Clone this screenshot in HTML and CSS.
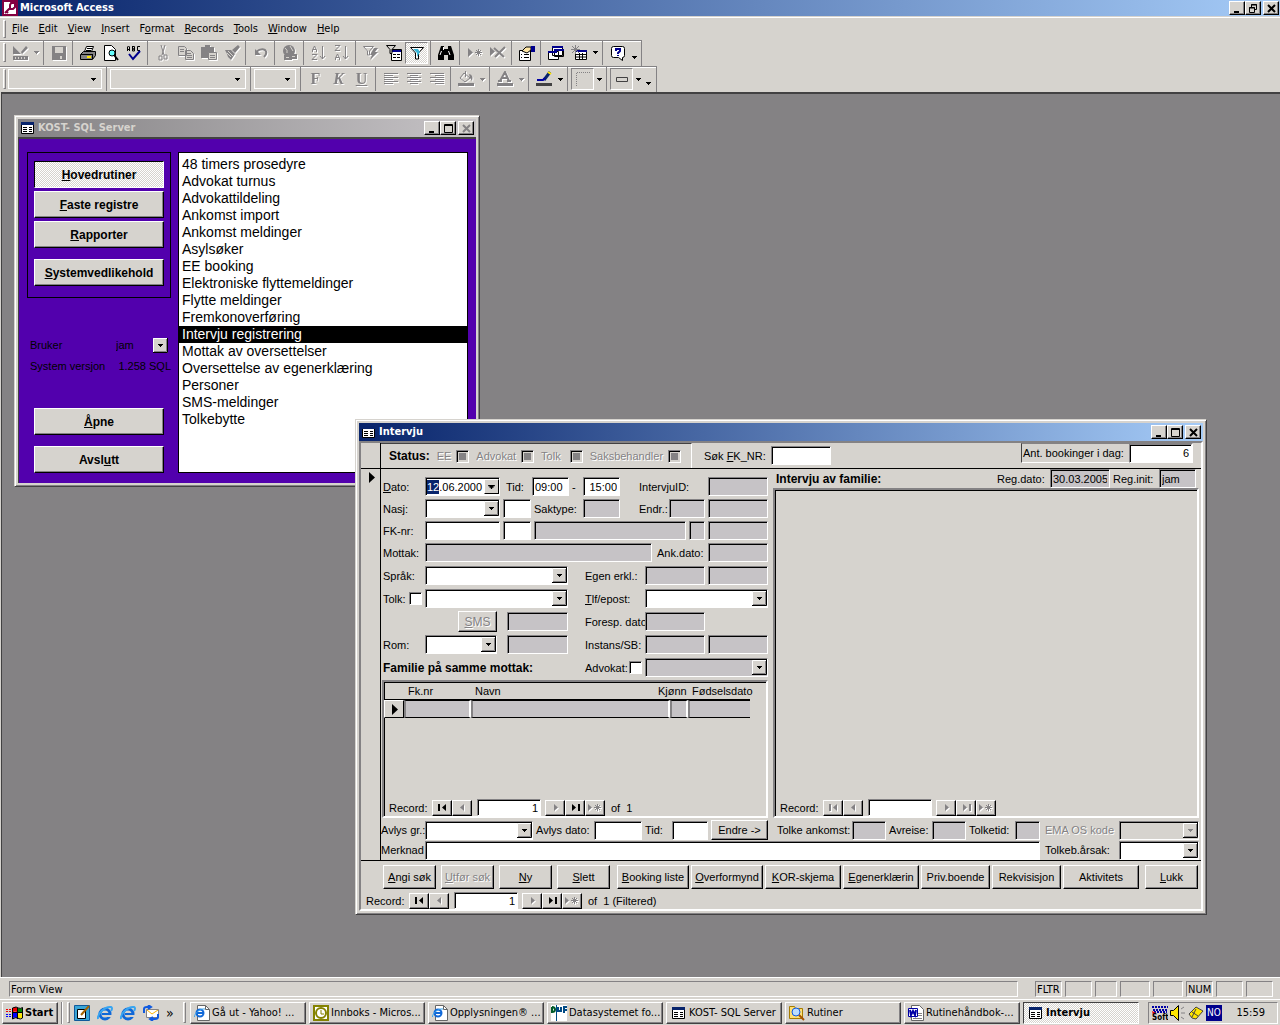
FILE: index.html
```html
<!DOCTYPE html>
<html lang="no">
<head>
<meta charset="utf-8">
<title>Microsoft Access</title>
<link rel="stylesheet" href="styles.css">
</head>
<body>
<svg class="defs" aria-hidden="true">
  <symbol id="form" viewBox="0 0 13 12"><path fill="#fff" stroke="#000" d="M.5.5h12v11H.5z"/><path fill="#08246b" d="M0 0h13v3H0z"/><path stroke="#000" d="M2 5.5h4M2 7.5h4M2 9.5h4M8 5.5h3M8 7.5h3M8 9.5h3"/></symbol>
  <symbol id="first" viewBox="0 0 11 9"><path fill="currentColor" d="M1 1h2v7H1zM9 1v7L5 4.500z"/></symbol>
  <symbol id="prev" viewBox="0 0 11 9"><path fill="currentColor" d="M7 1v7L3 4.500z"/></symbol>
  <symbol id="next" viewBox="0 0 11 9"><path fill="currentColor" d="M4 1v7l4-3.500z"/></symbol>
  <symbol id="last" viewBox="0 0 11 9"><path fill="currentColor" d="M8 1h2v7H8zM2 1v7l4-3.500z"/></symbol>
  <symbol id="new" viewBox="0 0 14 9"><path fill="currentColor" d="M0 1v7l4-3.500z"/><path stroke="currentColor" d="M9.500 1v7M6 4.500h7M7 2l5 5M12 2L7 7"/></symbol>
  <symbol id="down" viewBox="0 0 5 3"><path fill="currentColor" d="M0 0h5v1H4v1H3v1H2V2H1V1H0z"/></symbol>
  <symbol id="ie" viewBox="0 0 16 16"><circle cx="8" cy="9" r="5" fill="none" stroke="#1068d8" stroke-width="3"/><path fill="#1068d8" d="M5 8h8v2H5z"/><path fill="#d6d3ce" d="M10 10h6v2h-6z"/><path fill="none" stroke="#39a5f0" stroke-width="2" d="M1 14C0 9 8 1 14 2q2 1 0 4"/></symbol>
  <symbol id="iedoc" viewBox="0 0 16 16"><path fill="#fff" stroke="#666" d="M3.500.5h8l4 4v11h-12z"/><path fill="none" stroke="#666" d="M11.500.5v4h4"/><circle cx="6" cy="8" r="3.500" fill="none" stroke="#1068d8" stroke-width="2"/><path stroke="#1068d8" stroke-width="2" d="M3 8h7"/><path fill="none" stroke="#39a5f0" d="M.5 12C0 9 6 3 11 4"/></symbol>
</svg>

<header class="titlebar titlebar-app">
  <svg class="i16" viewBox="0 0 16 16"><path fill="#fff" stroke="#840042" stroke-width="2" d="M1 1h14v14H1z"/><path fill="none" stroke="#840042" stroke-width="2" d="M9 3h4v4l-2 2H8V5zM8 8l-5 5M4 11l2 2"/></svg>
  <h1>Microsoft Access</h1>
  <div class="winbtns">
    <button aria-label="Minimize"><svg viewBox="0 0 9 9"><path d="M1 7h5v2H1z"/></svg></button><button aria-label="Restore"><svg viewBox="0 0 9 9"><path fill="none" stroke="#000" d="M2.500 3V.5h5v5H6M.5 3.500h5v5h-5zM2 1h6M0 4h6"/></svg></button><button class="close" aria-label="Close"><svg viewBox="0 0 9 9"><path stroke="#000" stroke-width="2" d="M1 1l7 7M8 1L1 8"/></svg></button>
  </div>
</header>

<nav class="menubar">
  <span class="grip"></span>
  <button><u>F</u>ile</button><button><u>E</u>dit</button><button><u>V</u>iew</button><button><u>I</u>nsert</button><button>F<u>o</u>rmat</button><button><u>R</u>ecords</button><button><u>T</u>ools</button><button><u>W</u>indow</button><button><u>H</u>elp</button>
</nav>

<div class="toolbar" role="toolbar" aria-label="Form view">
  <span class="grip"></span>
  <button class="tb off" aria-label="View"><svg viewBox="0 0 16 16"><path fill="currentColor" d="M1 1l8 8H1zM1 11h15v4H1zM9 7l5-6 2 2-6 6z"/><path stroke="#d6d3ce" d="M3.500 12v2M6.500 12v2M9.500 12v2M12.500 12v2"/></svg></button><button class="dd off" aria-label="View list"><svg><use href="#down"/></svg></button>
  <span class="sep"></span>
  <button class="tb off" aria-label="Save"><svg viewBox="0 0 16 16"><path fill="currentColor" d="M1 1h14v14H1z"/><path fill="#d6d3ce" d="M4 2h8v6H4zM9 11h2v3H9z"/></svg></button>
  <span class="sep"></span>
  <button class="tb" aria-label="Print"><svg viewBox="0 0 16 16"><path fill="#fff" stroke="#000" d="M4.500 6.500l2-5h7l-2 5"/><path fill="#848284" stroke="#000" d="M.5 9.500l3-3h12v4l-3 4H.5z"/><path stroke="#000" d="M1 9.500h11M7 3.500h5M6 5.500h5M12.500 9v5"/><path fill="#ffe600" d="M7 11h4v2H7z"/></svg></button>
  <button class="tb" aria-label="Print preview"><svg viewBox="0 0 16 16"><path fill="#fff" stroke="#000" d="M1.500.5h7l4 4v11h-11z"/><circle cx="9" cy="8" r="3" fill="#6ff" stroke="#000"/><path stroke="#000" stroke-width="2" d="M11 10l4 5"/></svg></button>
  <button class="tb" aria-label="Spelling"><svg viewBox="0 0 16 16"><path fill="none" stroke="#000" d="M1.500 6V2l1-1 1 1v4M2 4.500h1M6.500 1v5h2V4H7h1.500V1.500h-2M14 1.500h-2.500v4H14"/><path fill="none" stroke="#00008c" stroke-width="2" d="M3 9l4 5 7-8"/></svg></button>
  <span class="sep"></span>
  <button class="tb off" aria-label="Cut"><svg viewBox="0 0 16 16"><path fill="none" stroke="currentColor" d="M6 0l3 10M10 0L7 10M4 11h3v4H4zM9 10h3v4H9z"/></svg></button>
  <button class="tb off" aria-label="Copy"><svg viewBox="0 0 16 16"><path fill="#d6d3ce" stroke="currentColor" d="M.5 1.500h6l2 2v7h-8zM7.500 5.500h5l3 3v6h-8zM2 4.500h4M2 6.500h4M9 8.500h4M9 10.500h5M9 12.500h5"/></svg></button>
  <button class="tb off" aria-label="Paste"><svg viewBox="0 0 16 16"><path fill="currentColor" d="M0 2h4V0h5v2h4v11H0z"/><path fill="#d6d3ce" stroke="currentColor" d="M7.500 7.500h8v7h-8zM9 10.500h5M9 12.500h5M4 3.500h5"/></svg></button>
  <button class="tb off" aria-label="Format painter"><svg viewBox="0 0 16 16"><path fill="currentColor" d="M14 0l2 2-5 6-3-3zM1 5l6 0 4 4-4 6-3-3-1-3z"/><path stroke="#d6d3ce" d="M4 6l5 5M3 8l4 4"/></svg></button>
  <span class="sep"></span>
  <button class="tb off" aria-label="Undo"><svg viewBox="0 0 16 16"><path fill="none" stroke="currentColor" stroke-width="2" d="M3 7q5-4 9-2 3 3-1 7"/><path fill="currentColor" d="M2 4v6h6z"/></svg></button>
  <span class="sep"></span>
  <button class="tb off" aria-label="Hyperlink"><svg viewBox="0 0 16 16"><circle cx="7" cy="6" r="6" fill="currentColor"/><path fill="none" stroke="#d6d3ce" d="M3 3q3 2 2 5M8 1l3 5"/><path fill="#d6d3ce" stroke="currentColor" stroke-width="2" d="M3 11h6v3H3zM8 10h6v3H8z"/></svg></button>
  <span class="sep"></span>
  <button class="tb off" aria-label="Sort ascending"><svg viewBox="0 0 16 16"><path fill="none" stroke="currentColor" d="M1.500 7V5l2-4 2 4v2M2 4.500h3M1 9.500h5l-5 5h5M11.500 1v13M9 11l2.500 3 2.500-3"/></svg></button>
  <button class="tb off" aria-label="Sort descending"><svg viewBox="0 0 16 16"><path fill="none" stroke="currentColor" d="M1 .5h5l-5 5h5M1.500 15v-2l2-4 2 4v2M2 12.500h3M11.500 1v13M9 11l2.500 3 2.500-3"/></svg></button>
  <span class="sep"></span>
  <button class="tb off" aria-label="Filter by selection"><svg viewBox="0 0 16 16"><path fill="none" stroke="currentColor" d="M.5 1.500h10L6.500 6v4h-2V6z"/><path fill="currentColor" d="M11 3h4l-3 4h3l-8 8 2-5H7z"/></svg></button>
  <button class="tb" aria-label="Filter by form"><svg viewBox="0 0 16 16"><path fill="#fff" stroke="#000" d="M5.500 4.500h10v11h-10z"/><path fill="#00008c" d="M6 5h9v2H6z"/><path stroke="#000" d="M7 9.500h3M7 12.500h3M11 9.500h3M11 12.500h3"/><path fill="#d6d3ce" stroke="#000" d="M.5.5h9L6 4.500v4H4v-4z"/></svg></button>
  <button class="tb pressed" aria-label="Remove filter" aria-pressed="true"><svg viewBox="0 0 16 16"><path fill="#fff" stroke="#000" d="M1.500 2.500h13L9.500 8v6h-3V8z"/><path fill="#39b5d6" d="M4 4h5l2 3-3 5V8z"/></svg></button>
  <span class="sep"></span>
  <button class="tb" aria-label="Find"><svg viewBox="0 0 16 16"><path d="M3 1h3v3h4V1h3l3 9v5h-6v-5H6v5H0v-5z"/><path stroke="#fff" d="M3.500 6L2 10M10.500 6L12 10M5.500 2v3"/></svg></button>
  <span class="sep"></span>
  <button class="tb off" aria-label="New record"><svg viewBox="0 0 16 16"><path fill="currentColor" d="M1 3v9l5-4.500z"/><path stroke="currentColor" d="M11.500 4v7M8 7.500h7M9 5l5 5M14 5l-5 5"/></svg></button>
  <button class="tb off" aria-label="Delete record"><svg viewBox="0 0 16 16"><path fill="currentColor" d="M0 2v9l5-4.500z"/><path stroke="currentColor" stroke-width="2" d="M4 3l10 9M15 2L5 12"/></svg></button>
  <span class="sep"></span>
  <button class="tb" aria-label="Properties"><svg viewBox="0 0 16 16"><path fill="#fff" stroke="#000" d="M.5 5.500h11v10H.5zM2 9.500h1M5 9.500h5M2 12.500h1M5 12.500h5"/><path fill="#ffe6a5" stroke="#000" d="M3 6l4-4h5v3L8 8z"/><path fill="#00008c" d="M12 1h4v6h-4z"/></svg></button>
  <span class="sep"></span>
  <button class="tb" aria-label="Database window"><svg viewBox="0 0 16 16"><path fill="#fff" stroke="#000" d="M4.500 1.500h10v9h-10zM.5 6.500h10v8H.5zM6.500 4.500h9v7h-9z"/><path fill="#00008c" d="M4 1h11v2H4zM0 6h9v2H0zM6 4h10v2H6z"/></svg></button>
  <button class="tb" aria-label="New object"><svg viewBox="0 0 16 16"><path fill="#fff" stroke="#000" d="M4.500 5.500h11v9h-11zM5 9.500h10M5 12h10M8.500 8v6M11.500 8v6"/><path fill="#00008c" d="M4 5h12v2H4z"/><path stroke="#848284" d="M4.500 0v9M0 4.500h9M1 1l7 7M8 1L1 8"/></svg></button><button class="dd" aria-label="New object list"><svg><use href="#down"/></svg></button>
  <span class="sep"></span>
  <button class="tb" aria-label="Help"><svg viewBox="0 0 16 16"><path fill="#fff" stroke="#000" d="M3.500 1.500h9q2 0 2 2v7q0 2-2 2v3l-4-3h-5q-2 0-2-2v-7q0-2 2-2z"/><path fill="none" stroke="#00008c" stroke-width="2" d="M6 6V4h4v2L8 8v1M8 10v1"/></svg></button><button class="dd low" aria-label="Toolbar options"><svg><use href="#down"/></svg></button>
</div>

<div class="toolbar toolbar-format" role="toolbar" aria-label="Formatting">
  <span class="grip"></span>
  <select class="tbsel tbsel-object" aria-label="Object"></select><span class="sep"></span>
  <select class="tbsel tbsel-font" aria-label="Font"></select><span class="sep"></span>
  <select class="tbsel tbsel-size" aria-label="Font size"></select><span class="sep"></span>
  <button class="tb off glyph"><b>F</b></button><button class="tb off glyph"><i>K</i></button><button class="tb off glyph"><u>U</u></button>
  <span class="sep"></span>
  <button class="tb off" aria-label="Align left"><svg viewBox="0 0 16 16"><path stroke="currentColor" d="M1 2.500h14M1 4.500h9M1 6.500h14M1 8.500h9M1 10.500h14M1 12.500h9"/></svg></button><button class="tb off" aria-label="Center"><svg viewBox="0 0 16 16"><path stroke="currentColor" d="M1 2.500h14M4 4.500h8M1 6.500h14M4 8.500h8M1 10.500h14M4 12.500h8"/></svg></button><button class="tb off" aria-label="Align right"><svg viewBox="0 0 16 16"><path stroke="currentColor" d="M1 2.500h14M6 4.500h9M1 6.500h14M6 8.500h9M1 10.500h14M6 12.500h9"/></svg></button>
  <span class="sep"></span>
  <button class="tb off" aria-label="Fill color"><svg viewBox="0 0 16 16"><path fill="currentColor" d="M0 12h16v3H0z"/><path fill="none" stroke="currentColor" d="M6 2l6 5-5 4-5-4zM7.500 0v6"/><path fill="currentColor" d="M11 3q5 1 3 7l-2-3z"/></svg></button><button class="dd off" aria-label="Fill colors"><svg><use href="#down"/></svg></button>
  <span class="sep gap"></span>
  <button class="tb off" aria-label="Font color"><svg viewBox="0 0 16 16"><path fill="currentColor" d="M0 12h16v3H0z"/><path fill="none" stroke="currentColor" stroke-width="2" d="M3 10L8 1l4 9M5 7h6M1 10h4M10 10h4"/></svg></button><button class="dd off" aria-label="Font colors"><svg><use href="#down"/></svg></button>
  <span class="sep"></span>
  <button class="tb" aria-label="Line color"><svg viewBox="0 0 16 16"><path fill="#424142" d="M0 12h16v3H0z"/><path stroke="#08246b" stroke-width="3" d="M14 1L8 9"/><path stroke="#ffe600" stroke-width="2" d="M12 1l3 2"/><path fill="none" stroke="#0000a5" stroke-width="2" d="M1 9h6l2-2"/></svg></button><button class="dd" aria-label="Line colors"><svg><use href="#down"/></svg></button>
  <span class="sep"></span>
  <button class="tb raised" aria-label="Line width"><svg viewBox="0 0 16 16"><path fill="none" stroke="#848284" stroke-dasharray="1 1" d="M1.500 15V1.500H16"/></svg></button><button class="dd" aria-label="Line widths"><svg><use href="#down"/></svg></button>
  <span class="sep"></span>
  <button class="tb raised" aria-label="Special effect"><svg viewBox="0 0 16 16"><path fill="#d6d3ce" stroke="#424142" d="M2.500 6.500h11v4h-11z"/></svg></button><button class="dd" aria-label="Special effects"><svg><use href="#down"/></svg></button><button class="dd low" aria-label="Toolbar options"><svg><use href="#down"/></svg></button>
</div>

<main class="workspace">
  <section class="window kost" aria-label="KOST- SQL Server">
    <div class="titlebar inactive">
      <svg class="formicon"><use href="#form"/></svg>
      <h2>KOST- SQL Server</h2>
      <div class="winbtns">
        <button aria-label="Minimize"><svg viewBox="0 0 9 9"><path d="M1 7h5v2H1z"/></svg></button><button aria-label="Maximize"><svg viewBox="0 0 9 9"><path fill="none" stroke="#000" d="M.5.5h8v8h-8zM0 1.500h9"/></svg></button><button class="close" aria-label="Close" disabled><svg viewBox="0 0 9 9"><path stroke="#848284" stroke-width="2" d="M1 1l7 7M8 1L1 8"/></svg></button>
      </div>
    </div>
    <div class="kost-body">
      <div class="kost-side">
        <div class="kost-group">
          <button class="big on"><span><u>H</u>ovedrutiner</span></button>
          <button class="big"><span><u>F</u>aste registre</span></button>
          <button class="big"><span><u>R</u>apporter</span></button>
          <button class="big apart"><span><u>S</u>ystemvedlikehold</span></button>
        </div>
        <div class="kost-info">
          <div><label for="bruker">Bruker</label><select id="bruker"><option>jam</option></select></div>
          <div><span>System versjon</span><span>1.258 SQL</span></div>
        </div>
        <div class="kost-actions">
          <button class="big"><span><u>Å</u>pne</span></button>
          <button class="big"><span>Avsl<u>u</u>tt</span></button>
        </div>
      </div>
      <select class="kost-list" size="18" aria-label="Rutiner">
        <option>48 timers prosedyre</option>
        <option>Advokat turnus</option>
        <option>Advokattildeling</option>
        <option>Ankomst import</option>
        <option>Ankomst meldinger</option>
        <option>Asylsøker</option>
        <option>EE booking</option>
        <option>Elektroniske flyttemeldinger</option>
        <option>Flytte meldinger</option>
        <option>Fremkonoverføring</option>
        <option selected>Intervju registrering</option>
        <option>Mottak av oversettelser</option>
        <option>Oversettelse av egenerklæring</option>
        <option>Personer</option>
        <option>SMS-meldinger</option>
        <option>Tolkebytte</option>
      </select>
    </div>
  </section>

  <section class="window intervju" aria-label="Intervju">
    <div class="titlebar">
      <svg class="formicon"><use href="#form"/></svg>
      <h2>Intervju</h2>
      <div class="winbtns">
        <button aria-label="Minimize"><svg viewBox="0 0 9 9"><path d="M1 7h5v2H1z"/></svg></button><button aria-label="Maximize"><svg viewBox="0 0 9 9"><path fill="none" stroke="#000" d="M.5.5h8v8h-8zM0 1.500h9"/></svg></button><button class="close" aria-label="Close"><svg viewBox="0 0 9 9"><path stroke="#000" stroke-width="2" d="M1 1l7 7M8 1L1 8"/></svg></button>
      </div>
    </div>
    <div class="client">
      <div class="form-head">
        <div class="selector"></div>
        <div class="status">
          <b>Status:</b>
          <label>EE <input type="checkbox" disabled></label>
          <label>Advokat <input type="checkbox" disabled></label>
          <label class="wide">Tolk <input type="checkbox" disabled></label>
          <label>Saksbehandler <input type="checkbox" disabled></label>
        </div>
        <label class="search"><span>Søk <u>F</u>K_NR:</span><input class="field w60"></label>
        <label class="count"><span>Ant. bookinger i dag:</span><input class="field w63 num" value="6"></label>
      </div>

      <div class="form-body">
        <div class="selector"><svg viewBox="0 0 6 11"><path d="M0 0l6 5.500L0 11z"/></svg></div>
        <div class="form-main">
          <div class="columns">
            <div class="left">
              <div class="rows">
                <div class="row"><label class="l40" for="dato"><u>D</u>ato:</label><span class="datebox"><input id="dato" value="12.06.2000"><button aria-label="Velg dato"><svg><use href="#down"/></svg></button></span><label class="l26 in3" for="tid1">Tid:</label><input class="field w37" id="tid1" value="09:00"><span>-</span><input class="field w37 push num" aria-label="Tid til" value="15:00"><label class="l82 in16" for="iid">IntervjuID:</label><input class="field ro w60" id="iid" readonly></div>
                <div class="row"><label class="l40" for="nasj">Nasj:</label><select class="field w75" id="nasj"></select><input class="field w28" aria-label="Nasjonskode"><label class="l46" for="sak">Saktype:</label><input class="field ro w37" id="sak" readonly><label class="l43 in16" for="endr">Endr.:</label><input class="field ro w36" id="endr" readonly><input class="field ro w60" aria-label="Endret dato" readonly></div>
                <div class="row"><label class="l40" for="fk">FK-nr:</label><input class="field w75" id="fk"><input class="field w28" aria-label="FK løpenr"><input class="field ro w152" aria-label="Navn" readonly><input class="field ro w16" aria-label="Kjønn" readonly><input class="field ro w60" aria-label="Født" readonly></div>
                <div class="row"><label class="l40" for="mottak">Mottak:</label><input class="field ro w227" id="mottak" readonly><label class="l50 in2" for="ank">Ank.dato:</label><input class="field ro w60" id="ank" readonly></div>
              </div>
              <div class="rows rows-b">
                <div class="row"><label class="l40" for="sprak">Språk:</label><select class="field w143" id="sprak"></select><label class="l71 in14" for="egen">Egen erkl.:</label><input class="field ro w60" id="egen" readonly><input class="field ro w60" aria-label="Egenerklæring dato" readonly></div>
                <div class="row"><label class="l24" for="tolkx">Tolk:</label><input type="checkbox" id="tolkx"><select class="field w143" aria-label="Tolk"></select><label class="l71 in14" for="tlf"><span><u>T</u>lf/epost:</span></label><select class="field w123" id="tlf"></select></div>
                <div class="row row-sms"><button class="btn sms" disabled><span><u>S</u>MS</span></button><input class="field ro w61 push" aria-label="SMS sendt" readonly><label class="l71 in14" for="for">Foresp. dato</label><input class="field ro w60" id="for" readonly></div>
                <div class="row"><label class="l40" for="rom">Rom:</label><select class="field w72" id="rom"></select><input class="field ro w61 push" aria-label="Rominfo" readonly><label class="l71 in14" for="inst">Instans/SB:</label><input class="field ro w60" id="inst" readonly><input class="field ro w60" aria-label="Saksbehandler" readonly></div>
                <div class="row"><b>Familie på samme mottak:</b><label class="l55 in14 push" for="adv">Advokat:</label><input type="checkbox" id="adv"><select class="field ro w123" aria-label="Advokat"></select></div>
              </div>
              <div class="subform">
                <table class="family">
                  <thead><tr><th class="c-sel"></th><th class="c-fk">Fk.nr</th><th class="c-navn">Navn</th><th class="c-kj"><span>Kjønn</span></th><th class="c-fd">Fødselsdato</th></tr></thead>
                  <tbody><tr><td class="mark"><svg viewBox="0 0 6 11"><path d="M0 0l6 5.500L0 11z"/></svg></td><td></td><td></td><td></td><td></td></tr></tbody>
                </table>
                <div class="recnav"><span>Record:</span><button aria-label="First"><svg><use href="#first"/></svg></button><button class="off" aria-label="Previous"><svg><use href="#prev"/></svg></button><input class="field" aria-label="Record number" value="1"><button class="off" aria-label="Next"><svg><use href="#next"/></svg></button><button aria-label="Last"><svg><use href="#last"/></svg></button><button class="off new" aria-label="New"><svg><use href="#new"/></svg></button><span class="of">of&nbsp; 1</span></div>
              </div>
            </div>
            <div class="right">
              <div class="right-head"><b>Intervju av familie:</b><label class="l50 push" for="regd">Reg.dato:</label><input class="field ro w60" id="regd" value="30.03.2005" readonly><label class="l43" for="regi">Reg.init:</label><input class="field ro w37" id="regi" value="jam" readonly></div>
              <div class="subform">
                <div class="recnav"><span>Record:</span><button class="off" aria-label="First"><svg><use href="#first"/></svg></button><button class="off" aria-label="Previous"><svg><use href="#prev"/></svg></button><input class="field" aria-label="Record number"><button class="off" aria-label="Next"><svg><use href="#next"/></svg></button><button class="off" aria-label="Last"><svg><use href="#last"/></svg></button><button class="off new" aria-label="New"><svg><use href="#new"/></svg></button></div>
              </div>
            </div>
          </div>
          <div class="cancel">
            <div class="cancel-l">
              <div class="row"><label class="l41" for="avg">Avlys gr.:</label><select class="field w108" id="avg"></select><label class="l55" for="avd">Avlys dato:</label><input class="field w48" id="avd"><label class="l24" for="avt">Tid:</label><input class="field w36" id="avt"><button class="btn endre">Endre -&gt;</button><label class="l78 in6" for="ta">Tolke ankomst:</label><input class="field ro w34" id="ta" readonly><label class="l40" for="avr">Avreise:</label><input class="field ro w34" id="avr" readonly><label class="l43" for="tt">Tolketid:</label><input class="field ro w25" id="tt" readonly></div>
              <div class="row"><label class="l41" for="merk">Merknad</label><input class="field grow" id="merk"></div>
            </div>
            <div class="cancel-r">
              <div class="row"><label class="l71 dim" for="ema">EMA OS kode</label><select class="field grow dimmed" id="ema" disabled></select></div>
              <div class="row"><label class="l71" for="tolkeb">Tolkeb.årsak:</label><select class="field grow" id="tolkeb"></select></div>
            </div>
          </div>
        </div>
      </div>

      <div class="form-foot">
        <div class="btns btns-edit"><button class="btn"><span><u>A</u>ngi søk</span></button><button class="btn" disabled><span><u>U</u>tfør søk</span></button><button class="btn"><span><u>N</u>y</span></button><button class="btn"><span><u>S</u>lett</span></button></div>
        <div class="btns btns-go"><button class="btn w72"><span><u>B</u>ooking liste</span></button><button class="btn w72"><span><u>O</u>verformynd</span></button><button class="btn w75"><span><u>K</u>OR-skjema</span></button><button class="btn w75"><span><u>E</u>generklærin</span></button><button class="btn w69">Priv.boende</button><button class="btn w69">Rekvisisjon</button><button class="btn w75">Aktivitets</button></div>
        <button class="btn lukk"><span><u>L</u>ukk</span></button>
      </div>
      <div class="recnav"><span>Record:</span><button aria-label="First"><svg><use href="#first"/></svg></button><button class="off" aria-label="Previous"><svg><use href="#prev"/></svg></button><input class="field" aria-label="Record number" value="1"><button class="off" aria-label="Next"><svg><use href="#next"/></svg></button><button aria-label="Last"><svg><use href="#last"/></svg></button><button class="off new" aria-label="New"><svg><use href="#new"/></svg></button><span class="of">of&nbsp; 1 (Filtered)</span></div>
    </div>
  </section>
</main>

<div class="statusbar">
  <span class="cell msg">Form View</span>
  <span class="cell c28">FLTR</span><span class="cell c28"></span><span class="cell c22"></span><span class="cell c30"></span><span class="cell c30"></span><span class="cell c28">NUM</span><span class="cell c28"></span><span class="cell c28"></span>
</div>

<footer class="taskbar">
  <button class="start"><svg viewBox="0 0 17 16"><path fill="#e00" d="M7 3q3-2 4 0v4q-2-1-4 0z"/><path fill="#008200" d="M12 3q2 1 4 0v4q-2 1-4 0z"/><path fill="#00f" d="M7 8q3-1 4 0v5q-2-1-4 0z"/><path fill="#ffe600" d="M12 8q2 1 4 0v5q-2 1-4 0z"/><path fill="none" stroke="#000" d="M6.500 14V3q4-2 6 0 2 1 4-.5V13q-2 2-5 0-2-1-5 1M11.500 3v11M6 7.500h10"/><path stroke="#e00" stroke-dasharray="2 1" d="M0 4.500h6M0 6.500h6"/><path stroke="#00f" stroke-dasharray="2 1" d="M0 9.500h6M0 11.500h6"/></svg>Start</button>
  <span class="divider"></span><span class="grip"></span>
  <div class="quick">
    <a href="#" aria-label="Desktop"><svg viewBox="0 0 16 16"><path fill="#39a5d6" stroke="#105a9c" d="M.5.5h15v15H.5z"/><path fill="#fff" stroke="#000" d="M3.500 4.500h8v9h-8z"/><path stroke="#a56300" stroke-width="2" d="M15 1L7 10"/></svg></a>
    <a href="#" aria-label="Internet Explorer"><svg><use href="#ie"/></svg></a>
    <a href="#" aria-label="Internet Explorer"><svg><use href="#ie"/></svg></a>
    <a href="#" aria-label="Outlook Express"><svg viewBox="0 0 16 16"><path fill="#fff" stroke="#848284" d="M3.500 4.500h12v8h-12z"/><path fill="none" stroke="#ffb500" d="M4 5l5 4 6-4"/><path fill="none" stroke="#105ae0" stroke-width="2" d="M1 8V4q0-2 3-2h3M5 0l3 2-3 2M15 9v3q0 2-3 2H8M10 12l-3 2 3 2"/></svg></a>
    <a href="#" class="more">»</a>
  </div>
  <span class="grip"></span>
  <div class="tasks">
    <button><svg><use href="#iedoc"/></svg><span>Gå ut - Yahoo! ...</span></button>
    <button><svg viewBox="0 0 16 16"><path fill="#848200" d="M0 0h16v16H0z"/><path fill="#fff" d="M2 2h12v12H2z"/><circle cx="8" cy="8" r="5" fill="#fff" stroke="#848200" stroke-width="2"/><path fill="none" stroke="#848200" d="M8 5v4h3"/></svg><span>Innboks - Micros...</span></button>
    <button><svg><use href="#iedoc"/></svg><span>Opplysningen® ...</span></button>
    <button><svg viewBox="0 0 16 16"><path fill="#fff" d="M0 0h16v16H0z"/><path stroke="#004a84" d="M5.500 0v16"/><path fill="none" stroke="#005a29" stroke-width="2" d="M1 2v5q3 0 3-2.500T1 2"/><path fill="none" stroke="#004a84" stroke-width="2" d="M7 2v4h3V2M13 8V2h3M13 5h3"/></svg><span>Datasystemet fo...</span></button>
    <button><svg class="formicon"><use href="#form"/></svg><span>KOST- SQL Server</span></button>
    <button><svg viewBox="0 0 16 16"><path fill="#ffdf73" stroke="#a57b00" d="M.5 1.500h5l1 2h7v10H.5z"/><circle cx="7" cy="7" r="4" fill="#bdf" stroke="#105ae0"/><path stroke="#a55200" stroke-width="2" d="M10 10l5 5"/></svg><span>Rutiner</span></button>
    <button><svg viewBox="0 0 16 16"><path fill="#fff" stroke="#666" d="M3.500.5h8l4 4v11h-12z"/><path fill="#fff" stroke="#0000a5" d="M.5 3.500h9v8h-9z"/><path fill="none" stroke="#0000a5" stroke-width="2" d="M2 5l1 5 2-4 2 4 1-5"/><path stroke="#848284" d="M10 8.500h4M10 10.500h4M5 13.500h9"/></svg><span>Rutinehåndbok-...</span></button>
    <button class="on"><svg class="formicon"><use href="#form"/></svg><span>Intervju</span></button>
  </div>
  <div class="tray">
    <svg viewBox="0 0 16 16"><path stroke="#0000a5" stroke-width="2" stroke-dasharray="2 1" d="M0 2h16M1 5h15M2 7h13"/><path fill="#e00" d="M0 6l4 2-3 2z"/><text x="0" y="15" font-size="8" font-weight="bold">Soft</text></svg>
    <svg viewBox="0 0 16 16"><path fill="#ffe600" stroke="#000" d="M.5 5.500h3l5-5v15l-5-5h-3z"/><path stroke="#848284" d="M11 4l3-2M11 8h4M11 12l3 2"/></svg>
    <svg viewBox="0 0 16 16"><path fill="#ffe600" stroke="#424142" d="M1 9l7-7 7 4-7 8-4-1z"/><path stroke="#424142" d="M4 7l6 4M8 4l-4 8"/></svg>
    <span class="lang">NO</span>
    <time>15:59</time>
  </div>
</footer>
<script src="app.js"></script>
</body>
</html>
```
FILE: app.js
```js
// Open the form with the day part of the date selected, ready for typing.
const dato = document.getElementById('dato');
dato.focus();
dato.setSelectionRange(0, 2);
```
FILE: styles.css
```css
:root {
  --face: #d6d3ce;
  --shade: #848284;
  --dark: #424142;
  --ro: #c6c3c6;
  --sys: "DejaVu Sans Condensed", "DejaVu Sans", sans-serif;
  --form: "Liberation Sans", Arial, sans-serif;
  --dither: repeating-conic-gradient(#fff 0 25%, var(--face) 0 50%) 0 0 / 2px 2px;
  --arrow: url("data:image/svg+xml,%3Csvg xmlns='http://www.w3.org/2000/svg' width='15' height='15'%3E%3Cpath fill='%23d6d3ce' d='M0 0h15v15H0z'/%3E%3Cpath fill='none' stroke='%23fff' d='M.5 14V.5H14'/%3E%3Cpath fill='none' stroke='%23848284' d='M13.500 1v12.500H1'/%3E%3Cpath fill='none' stroke='%23000' d='M14.500 0v14.500H0'/%3E%3Cpath d='M5 6h5v1H9v1H8v1H7V8H6V7H5z'/%3E%3C/svg%3E");
  --arrow-off: url("data:image/svg+xml,%3Csvg xmlns='http://www.w3.org/2000/svg' width='15' height='15'%3E%3Cpath fill='%23d6d3ce' d='M0 0h15v15H0z'/%3E%3Cpath fill='none' stroke='%23fff' d='M.5 14V.5H14'/%3E%3Cpath fill='none' stroke='%23848284' d='M13.500 1v12.500H1'/%3E%3Cpath fill='none' stroke='%23000' d='M14.500 0v14.500H0'/%3E%3Cpath fill='%23848284' d='M5 6h5v1H9v1H8v1H7V8H6V7H5z'/%3E%3C/svg%3E");
}
* { box-sizing: border-box; }
body {
  margin: 0;
  min-height: 100vh;
  display: flex;
  flex-direction: column;
  background: var(--face);
  color: #000;
  font: 11px/14px var(--sys);
}
button, input, select { font: inherit; color: inherit; margin: 0; padding: 0; border: 0; border-radius: 0; background: none; outline: 0; }
button { white-space: nowrap; flex: none; }
svg { display: block; flex: none; }
h1, h2 { margin: 0; font-size: 11px; line-height: 14px; }
.defs { position: absolute; width: 0; height: 0; }
.i16 { width: 16px; height: 16px; }
.formicon { width: 13px; height: 12px; }

.titlebar {
  display: flex;
  align-items: center;
  gap: 4px;
  height: 18px;
  padding: 0 2px 0 3px;
  color: #fff;
  background: linear-gradient(to right, #08246b, #a5cbf7);
}
.titlebar-app { height: 16px; gap: 2px; padding: 0 1px 0 2px; }
.titlebar.inactive { color: var(--face); background: linear-gradient(to right, #848284, #c6c3c6); }
.winbtns { display: flex; margin-left: auto; }
.winbtns button {
  width: 16px;
  height: 14px;
  display: flex;
  align-items: center;
  justify-content: center;
  background: var(--face);
  border: 1px solid;
  border-color: #fff #000 #000 #fff;
  box-shadow: inset -1px -1px var(--shade);
}
.winbtns svg { width: 9px; height: 9px; }
.winbtns .close { margin-left: 2px; }

.grip { width: 3px; align-self: stretch; margin: 2px 0; border: 1px solid; border-color: #fff var(--shade) var(--shade) #fff; flex: none; }
.menubar {
  display: flex;
  align-items: center;
  gap: 10px;
  height: 23px;
  margin-top: 1px;
  padding: 0 3px;
  border-top: 1px solid #fff;
}
.menubar .grip { margin-right: -4px; }
.toolbar {
  display: flex;
  align-items: center;
  width: 642px;
  height: 26px;
  padding: 0 0 2px 3px;
  border-top: 1px solid var(--shade);
  border-right: 1px solid var(--shade);
  box-shadow: inset 0 1px #fff;
}
.toolbar .grip { margin-right: 2px; }
.toolbar-format { width: 657px; padding-bottom: 1px; }
.sep { width: 1px; height: 24px; margin: 0 3px 0 2px; background: var(--shade); flex: none; }
.tb { width: 23px; height: 22px; display: flex; align-items: center; justify-content: center; }
.tb svg { width: 16px; height: 16px; }
.dd { width: 10px; height: 22px; display: flex; align-items: center; justify-content: center; }
.dd svg { width: 5px; height: 3px; }
.dd.low { align-items: flex-end; padding-bottom: 5px; }
.off { color: var(--shade); }
.off svg, .glyph * { filter: drop-shadow(1px 1px 0 #fff); }
.glyph { font: 16px/18px "Liberation Serif", serif; font-weight: bold; }
.pressed { border: 1px solid; border-color: var(--shade) #fff #fff var(--shade); background: var(--dither); }
.raised { border: 1px solid; border-color: var(--shade) #fff #fff var(--shade); }
.tbsel {
  appearance: none;
  height: 20px;
  border: 1px solid #fff;
  background: linear-gradient(#000, #000) right 5px top 8px / 5px 1px no-repeat, linear-gradient(#000, #000) right 6px top 9px / 3px 1px no-repeat, linear-gradient(#000, #000) right 7px top 10px / 1px 1px no-repeat;
}
.tbsel-object { width: 94px; margin-right: 2px; }
.tbsel-font { width: 136px; margin-right: 2px; }
.tbsel-size { width: 42px; margin-right: 2px; }

.workspace {
  flex: 1;
  position: relative;
  margin-left: 1px;
  border-top: 2px solid var(--dark);
  border-left: 1px solid var(--dark);
  background: var(--shade);
  min-height: 826px;
}
.window {
  position: absolute;
  padding: 3px;
  background: var(--face);
  border: 1px solid;
  border-color: var(--face) var(--dark) var(--dark) var(--face);
  box-shadow: inset 1px 1px #fff, inset -1px -1px var(--shade);
}
.kost { left: 12px; top: 21px; width: 466px; }
.intervju { left: 353px; top: 325px; width: 852px; font-family: var(--form); }
.intervju h2 { font-family: var(--sys); }

.kost-body {
  display: flex;
  gap: 7px;
  padding: 13px 8px 10px;
  background: #5200ad;
  border-top: 2px solid var(--dark);
  border-left: 1px solid var(--dark);
  font-family: var(--form);
}
.kost-side { width: 144px; display: flex; flex-direction: column; }
.kost-group { display: flex; flex-direction: column; gap: 3px; padding: 8px 6px 11px; border: 1px solid #000; }
.big {
  height: 27px;
  background: var(--face);
  border: 1px solid;
  border-color: #fff #000 #000 #fff;
  box-shadow: inset -1px -1px var(--shade);
  font-size: 12px;
  font-weight: bold;
}
.big.on { border-color: #000 #fff #fff #000; box-shadow: none; background: var(--dither); }
.big.apart { margin-top: 8px; }
.kost-info { padding: 38px 0 0 3px; display: flex; flex-direction: column; gap: 3px; }
.kost-info div { display: flex; justify-content: space-between; align-items: center; height: 18px; }
.kost-info select { appearance: none; width: 52px; height: 17px; margin-right: 3px; background: var(--arrow) right center no-repeat; }
.kost-actions { display: flex; flex-direction: column; gap: 11px; margin: auto 7px 0; }
.kost-list {
  flex: 1;
  min-width: 0;
  height: 321px;
  padding: 3px 0 0;
  background: #fff;
  border: 1px solid #000;
  overflow: hidden;
  font-size: 14px;
}
.kost-list option { height: 17px; min-height: 17px; line-height: 17px; padding: 0 3px; }
.kost-list option:checked { background: #000 linear-gradient(#000, #000); color: #fff; }

.client { border: 2px solid; border-color: var(--shade) #fff #fff var(--shade); }
.field {
  height: 19px;
  padding: 0 2px;
  background-color: #fff;
  border: 1px solid;
  border-color: var(--shade) #fff #fff var(--shade);
  box-shadow: inset 1px 1px #000;
  flex: none;
}
.field.ro { background-color: var(--ro); }
.field.dimmed { background-color: var(--face); }
select.field { appearance: none; background-image: var(--arrow); background-repeat: no-repeat; background-position: right 0 top 1px; }
select.dimmed { background-image: var(--arrow-off); opacity: 1; }
.num { text-align: right; }
.field.grow { flex: 1; min-width: 0; }
.push { margin-left: auto; }
input[type="checkbox"] {
  appearance: none;
  width: 13px;
  height: 13px;
  background: #fff;
  border: 1px solid;
  border-color: var(--shade) #fff #fff var(--shade);
  box-shadow: inset 1px 1px #000;
  flex: none;
}
input[type="checkbox"]:disabled { background: var(--shade); box-shadow: inset 1px 1px #000, inset 0 0 0 2px var(--face); }

.selector { width: 20px; border-right: 1px solid #000; flex: none; }
.selector svg { width: 6px; height: 11px; margin: 3px 0 0 8px; }
.form-head { display: flex; height: 26px; border-bottom: 1px solid #000; }
.status {
  display: flex;
  align-items: center;
  gap: 7px;
  width: 311px;
  padding-left: 8px;
  border-top: 1px solid var(--dark);
  border-right: 1px solid #fff;
  color: var(--shade);
}
.status b { color: #000; font-size: 12px; }
.status label { display: flex; align-items: center; gap: 5px; text-shadow: 1px 1px #fff; }
.status label.wide { gap: 9px; }
.search { display: flex; align-items: center; gap: 5px; margin-left: 12px; }
.count {
  display: flex;
  align-items: center;
  justify-content: space-between;
  width: 172px;
  height: 20px;
  margin: 0 8px 0 auto;
  padding-left: 1px;
  border: 1px solid;
  border-color: var(--shade) #fff #fff var(--dark);
}
.form-body { display: flex; }
.form-main { flex: 1; min-width: 0; padding-right: 2px; }
.columns { display: flex; gap: 5px; padding-left: 1px; }
.left { width: 386px; padding-top: 8px; flex: none; }
.left b, .right b { font-size: 12px; white-space: nowrap; }
.rows { display: flex; flex-direction: column; gap: 3px; }
.rows-b { gap: 4px; margin-top: 4px; }
.rows label:first-child, .rows b { padding-left: 1px; }
.row { display: flex; align-items: center; gap: 3px; height: 19px; }
.row-sms { padding: 0 63px 0 76px; }
.row label, .right-head label { white-space: nowrap; flex: none; }

.datebox { display: flex; width: 75px; height: 19px; border: 1px solid; border-color: var(--shade) #fff #fff var(--shade); box-shadow: inset 1px 1px #000; background: #fff; }
.datebox input { width: 58px; flex: none; padding-left: 1px; background: none; }
.datebox input::selection { background: #08246b; color: #fff; }
.datebox button { width: 15px; margin: 1px 0; display: flex; align-items: center; justify-content: center; background: var(--face); border: 1px solid; border-color: #fff #000 #000 #fff; }
.datebox svg { width: 7px; height: 4px; }

.btn {
  height: 24px;
  background: var(--face);
  border: 1px solid;
  border-color: #fff #000 #000 #fff;
  box-shadow: inset -1px -1px var(--shade);
}
.btn:disabled { color: var(--shade); text-shadow: 1px 1px #fff; }
.sms { width: 39px; height: 21px; font-size: 12px; }
.endre { width: 57px; height: 20px; }

.subform { display: flex; flex-direction: column; border: 2px solid; border-color: var(--shade) #fff #fff var(--shade); box-shadow: inset 1px 1px #000; }
.left .subform { height: 138px; margin-top: 3px; }
.subform .recnav { margin-top: auto; }
.right { flex: 1; display: flex; flex-direction: column; }
.right .subform { flex: 1; }
.right-head { display: flex; align-items: center; gap: 3px; height: 19px; padding: 0 3px 0 3px; }
.family { table-layout: fixed; width: 366px; border-collapse: separate; border-spacing: 0; }
.family th { height: 18px; padding: 0 0 0 4px; font-weight: normal; text-align: left; white-space: nowrap; border-bottom: 1px solid #000; }
.family td { height: 18px; padding: 0; background: var(--ro); border: solid; border-width: 1px 2px 1px 2px; border-color: #000 #fff #000 var(--shade); }
.family td.mark { background: var(--face); border-color: #fff #000 #000 #fff; border-width: 1px; }
.family td:last-child { border-right: 0; }
.family td svg { width: 6px; height: 11px; margin-left: 7px; }
.c-sel { width: 20px; }
.c-fk { width: 67px; }
.c-navn { width: 199px; }
.c-kj { width: 18px; }
.c-kj span { display: block; margin-left: -16px; }
.recnav { display: flex; align-items: center; height: 17px; padding-left: 5px; }
.recnav span:first-child { width: 43px; }
.recnav button { width: 20px; height: 16px; display: flex; align-items: center; justify-content: center; border: 1px solid; border-color: #fff #000 #000 #fff; box-shadow: inset -1px -1px var(--shade); }
.recnav svg { width: 11px; height: 9px; }
.recnav .new svg { width: 14px; }
.recnav .field { width: 64px; height: 17px; margin: 0 4px 0 5px; text-align: right; }
.recnav .of { margin-left: 6px; }

.cancel { display: flex; gap: 5px; padding-top: 2px; }
.cancel-l { width: 659px; }
.cancel .row { height: 20px; }
.cancel-r { flex: 1; }
.dim { color: var(--shade); text-shadow: 1px 1px #fff; }

.form-foot { display: flex; align-items: center; border-top: 1px solid #000; height: 32px; padding: 0 3px 0 22px; }
.btns { display: flex; }
.btns-edit { gap: 5px; }
.btns-edit .btn, .lukk { width: 53px; }
.btns-go { gap: 2px; margin-left: 7px; }
.btns-go .w75 { width: 76px; }
.lukk { margin-left: auto; }

.l24 { width: 24px; }
.l26 { width: 26px; }
.l40 { width: 40px; }
.l41 { width: 41px; }
.l43 { width: 43px; }
.l46 { width: 46px; }
.l50 { width: 50px; }
.l55 { width: 55px; }
.l71 { width: 71px; }
.l78 { width: 78px; }
.l82 { width: 82px; }
.in2 { padding-left: 2px; }
.in3 { padding-left: 3px; }
.in6 { padding-left: 6px; }
.in14 { padding-left: 14px; }
.in16 { padding-left: 16px; }
.w16 { width: 16px; }
.w25 { width: 25px; }
.w28 { width: 28px; }
.w34 { width: 34px; }
.w36 { width: 36px; }
.w37 { width: 37px; }
.w48 { width: 48px; }
.w60 { width: 60px; }
.w61 { width: 61px; }
.w63 { width: 63px; }
.w69 { width: 69px; }
.w72 { width: 72px; }
.w75 { width: 75px; }
.w108 { width: 108px; }
.w123 { width: 123px; }
.w143 { width: 143px; }
.w152 { width: 152px; }
.w227 { width: 227px; }

.statusbar { display: flex; align-items: center; gap: 3px; height: 22px; padding: 0 7px 0 9px; border-top: 1px solid #fff; }
.cell { height: 16px; line-height: 15px; padding-left: 1px; border: 1px solid; border-color: var(--shade) #fff #fff var(--shade); flex: none; }
.cell.msg { flex: 1; margin-right: 14px; }
.c22 { width: 22px; }
.c28 { width: 27px; }
.c30 { width: 30px; }

.taskbar { display: flex; align-items: center; height: 26px; padding: 0 2px; border-top: 1px solid #fff; }
.start, .tasks button {
  display: flex;
  align-items: center;
  height: 22px;
  border: 1px solid;
  border-color: #fff var(--dark) var(--dark) #fff;
  box-shadow: inset -1px -1px var(--shade);
}
.start { width: 56px; gap: 2px; padding-left: 3px; font-weight: bold; }
.start svg { width: 17px; height: 16px; }
.divider { width: 2px; height: 22px; margin: 0 4px 0 3px; border-left: 1px solid var(--shade); border-right: 1px solid #fff; }
.quick { display: flex; gap: 7px; align-items: center; margin: 0 5px 0 4px; width: 104px; }
.quick a { color: #000; text-decoration: none; }
.quick svg { width: 16px; height: 16px; }
.more { font-size: 14px; }
.tasks { display: flex; flex: 1; gap: 3px; margin-left: 4px; }
.tasks button { flex: 1 1 0; min-width: 0; gap: 2px; padding-left: 3px; overflow: hidden; }
.tasks svg { width: 16px; height: 16px; }
.tasks .formicon { width: 13px; height: 12px; margin: 0 2px; }
.tasks .on { font-weight: bold; background: var(--dither); border-color: var(--dark) #fff #fff var(--dark); box-shadow: none; }
.tray { display: flex; align-items: center; gap: 2px; width: 130px; height: 22px; margin-left: 9px; padding: 0 12px 0 3px; border: 1px solid; border-color: var(--shade) #fff #fff var(--shade); }
.tray svg { width: 16px; height: 16px; }
.lang { width: 16px; height: 16px; line-height: 16px; background: #00008c; color: #fff; text-align: center; font-size: 10px; }
.tray time { margin-left: auto; }
```
